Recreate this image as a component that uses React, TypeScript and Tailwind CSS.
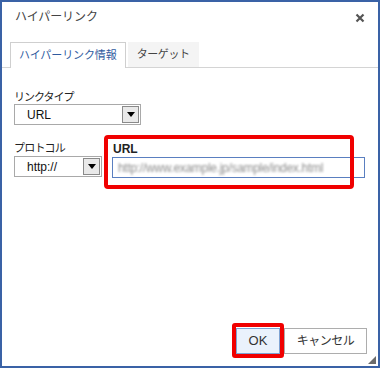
import React from "react";

const font = { fontFamily: '"Liberation Sans", "Noto Sans CJK JP", sans-serif' };

function Select({ value, width }: { value: string; width: string }) {
  return (
    <div className={`${width} h-[21px] border border-[#a9a9a9] bg-white flex items-stretch`}>
      <div className="flex-1 flex items-center pl-[12px] text-[12px] text-[#111] leading-none">{value}</div>
      <div className="w-[17px] m-px ml-0 border border-[#8a8a8a] bg-[#e9e9e9] flex items-center justify-center">
        <svg width="8" height="5" viewBox="0 0 8 5">
          <polygon points="0,0 8,0 4,5" fill="#000" />
        </svg>
      </div>
    </div>
  );
}

export default function App() {
  return (
    <div
      className="relative w-[380px] h-[368px] box-border border-2 border-[#3a62a6] bg-white flex flex-col text-[#333]"
      style={font}
    >
      {/* Title */}
      <div className="h-[30px] flex items-center justify-between pl-[13px] pr-[13px]">
        <span className="text-[12px] text-[#444] tracking-[-0.1px]">ハイパーリンク</span>
        <svg width="10" height="10" viewBox="0 0 10 10" className="mt-[1px]">
          <path d="M1.5 1.5 L8.5 8.5 M8.5 1.5 L1.5 8.5" stroke="#555" strokeWidth="2.2" />
        </svg>
      </div>

      {/* Tabs */}
      <div className="mt-[10px] flex items-end border-b border-[#d4d4d4] pl-[8px] gap-[2px]">
        <div className="h-[26px] -mb-px border border-b-0 border-[#cfcfcf] bg-white px-[8px] flex items-center text-[11px] text-[#2f5b9f] tracking-[-0.1px]">
          ハイパーリンク情報
        </div>
        <div className="h-[25px] bg-[#f4f4f4] px-[9px] flex items-center text-[11px] text-[#444] tracking-[-0.4px]">
          ターゲット
        </div>
      </div>

      {/* Body */}
      <div className="pl-[12px] pr-[13px] pt-[23px] flex flex-col">
        <div className="h-[13px] text-[11px] leading-[13px] text-[#222] tracking-[-1px]">リンクタイプ</div>
        <Select value="URL" width="w-[127px]" />

        <div className="mt-[17px] flex items-start">
          <div className="flex flex-col w-[88px]">
            <div className="h-[14px] text-[11px] leading-[13px] text-[#222] tracking-[-0.8px]">プロトコル</div>
            <Select value="http://" width="w-[88px]" />
          </div>
          <div className="flex-1 flex flex-col ml-[10px]">
            <div className="h-[15px] pl-[1px] text-[12px] font-bold leading-[14px] text-[#222]">URL</div>
            <div className="h-[21px] border border-[#5a7fc0] bg-white flex items-center pl-[5px] overflow-hidden">
              <span className="text-[12px] text-[#8f8f8f] blur-[1.2px] whitespace-nowrap tracking-[-0.3px]">
                http://www.example.jp/sample/index.html
              </span>
            </div>
          </div>
        </div>
      </div>

      {/* Buttons */}
      <div className="mt-auto pb-[12px] pr-[11px] flex justify-end gap-[4px]">
        <button className="w-[44px] h-[26px] border border-[#7ea3d3] bg-[#eaf2fc] text-[13px] text-[#333] flex items-center justify-center">
          OK
        </button>
        <button className="w-[83px] h-[26px] border border-[#adadad] bg-white text-[12px] text-[#333] flex items-center justify-center tracking-[-0.5px]">
          キャンセル
        </button>
      </div>

      {/* Red annotation boxes */}
      <div className="absolute left-[102px] top-[133px] w-[250px] h-[54px] border-[4px] border-[#f00000] rounded-[4px] pointer-events-none" />
      <div className="absolute left-[230px] top-[321px] w-[52px] h-[35px] border-[4px] border-[#f00000] rounded-[3px] pointer-events-none" />

      {/* Resize grip */}
      <svg className="absolute right-[2px] bottom-[2px]" width="8" height="8" viewBox="0 0 8 8">
        <polygon points="8,0 8,8 0,8" fill="#6b6b6b" />
      </svg>
    </div>
  );
}
